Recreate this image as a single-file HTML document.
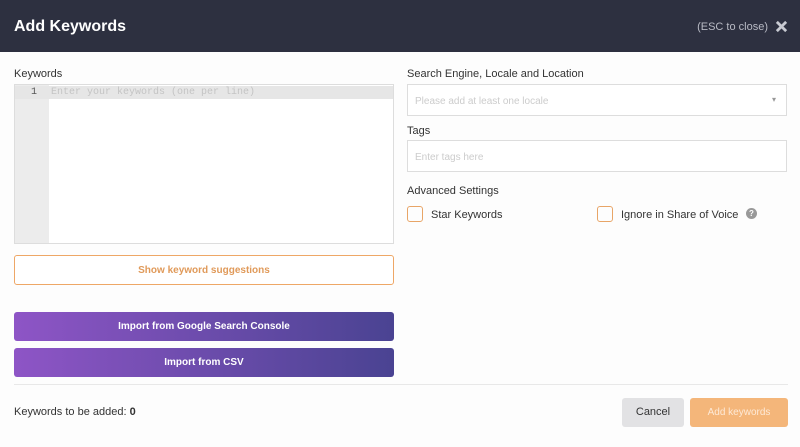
<!DOCTYPE html>
<html><head><style>
*{box-sizing:border-box;margin:0;padding:0}
body{width:800px;height:447px;background:#fdfdfd;font-family:"Liberation Sans",sans-serif;position:relative;overflow:hidden;color:#333}
.hdr{position:absolute;left:0;top:0;width:800px;height:52px;background:#2d3040}
.hdr h1{position:absolute;left:14px;top:18px;font-size:16px;color:#fff;font-weight:bold}
.esc{position:absolute;right:32px;top:21px;font-size:11px;color:#b8bac4}
.x{position:absolute;right:12px;top:20px;width:13px;height:13px}
.lbl{position:absolute;font-size:11px;color:#333}
.ed{position:absolute;left:14px;top:84px;width:380px;height:160px;border:1px solid #ddd;background:#fff}
.gut{position:absolute;left:0;top:0;width:34px;height:158px;background:#ececec}
.line1{position:absolute;left:0;top:1px;width:378px;height:13px;background:#e6e6e6}
.ed .n{position:absolute;left:16px;top:2px;font-size:10px;color:#555;font-family:"Liberation Mono",monospace}
.ed .ph{position:absolute;left:36px;top:2px;font-size:10px;color:#c4c4c4;font-family:"Liberation Mono",monospace}
.inp{position:absolute;left:407px;width:380px;height:32px;border:1px solid #ddd;background:#fff;font-size:10px;color:#ccc;padding:10px 7px}
.btn{position:absolute;left:14px;width:380px;border-radius:3px;font-size:10px;font-weight:bold;text-align:center;color:#fff}
.pur{background:linear-gradient(90deg,#8e55c6,#4a4392)}
.cb{position:absolute;width:16px;height:16px;border:1.5px solid #e8a567;border-radius:3px}
</style></head><body>
<div class="hdr"><h1>Add Keywords</h1><span class="esc">(ESC to close)</span>
<svg class="x" viewBox="0 0 14 14"><path d="M2 2L12 12M12 2L2 12" stroke="#c8cad2" stroke-width="3"/></svg></div>
<div class="lbl" style="left:14px;top:68px">Keywords</div>
<div class="ed"><div class="gut"></div><div class="line1"></div><span class="n">1</span><span class="ph">Enter your keywords (one per line)</span></div>
<div class="btn" style="top:255px;height:30px;line-height:29px;border:1.5px solid #eea766;color:#e09a5a;background:#fff">Show keyword suggestions</div>
<div class="btn pur" style="top:312px;height:29px;line-height:30px">Import from Google Search Console</div>
<div class="btn pur" style="top:348px;height:29px;line-height:30px">Import from CSV</div>
<div class="lbl" style="left:407px;top:68px">Search Engine, Locale and Location</div>
<div class="inp" style="top:84px;padding-top:11px">Please add at least one locale<span style="position:absolute;right:10px;top:10px;color:#999;font-size:8px">▾</span></div>
<div class="lbl" style="left:407px;top:125px">Tags</div>
<div class="inp" style="top:140px;padding-top:11px">Enter tags here</div>
<div class="lbl" style="left:407px;top:185px">Advanced Settings</div>
<div class="cb" style="left:407px;top:206px"></div>
<div class="lbl" style="left:431px;top:209px">Star Keywords</div>
<div class="cb" style="left:597px;top:206px"></div>
<div class="lbl" style="left:621px;top:209px">Ignore in Share of Voice</div>
<div style="position:absolute;left:746px;top:208px;width:11px;height:11px;border-radius:50%;background:#999;color:#fff;font-size:8px;text-align:center;line-height:11px;font-weight:bold">?</div>
<div style="position:absolute;left:14px;top:384px;width:774px;height:1px;background:#e8e8e8"></div>
<div class="lbl" style="left:14px;top:406px">Keywords to be added: <b>0</b></div>
<div style="position:absolute;left:622px;top:398px;width:62px;height:29px;background:#e2e2e4;border-radius:3px;font-size:11px;text-align:center;line-height:29px;color:#333">Cancel</div>
<div style="position:absolute;left:690px;top:398px;width:98px;height:29px;background:#f4b67a;border-radius:3px;font-size:10px;text-align:center;line-height:29px;color:#fde9d6">Add keywords</div>
</body></html>
